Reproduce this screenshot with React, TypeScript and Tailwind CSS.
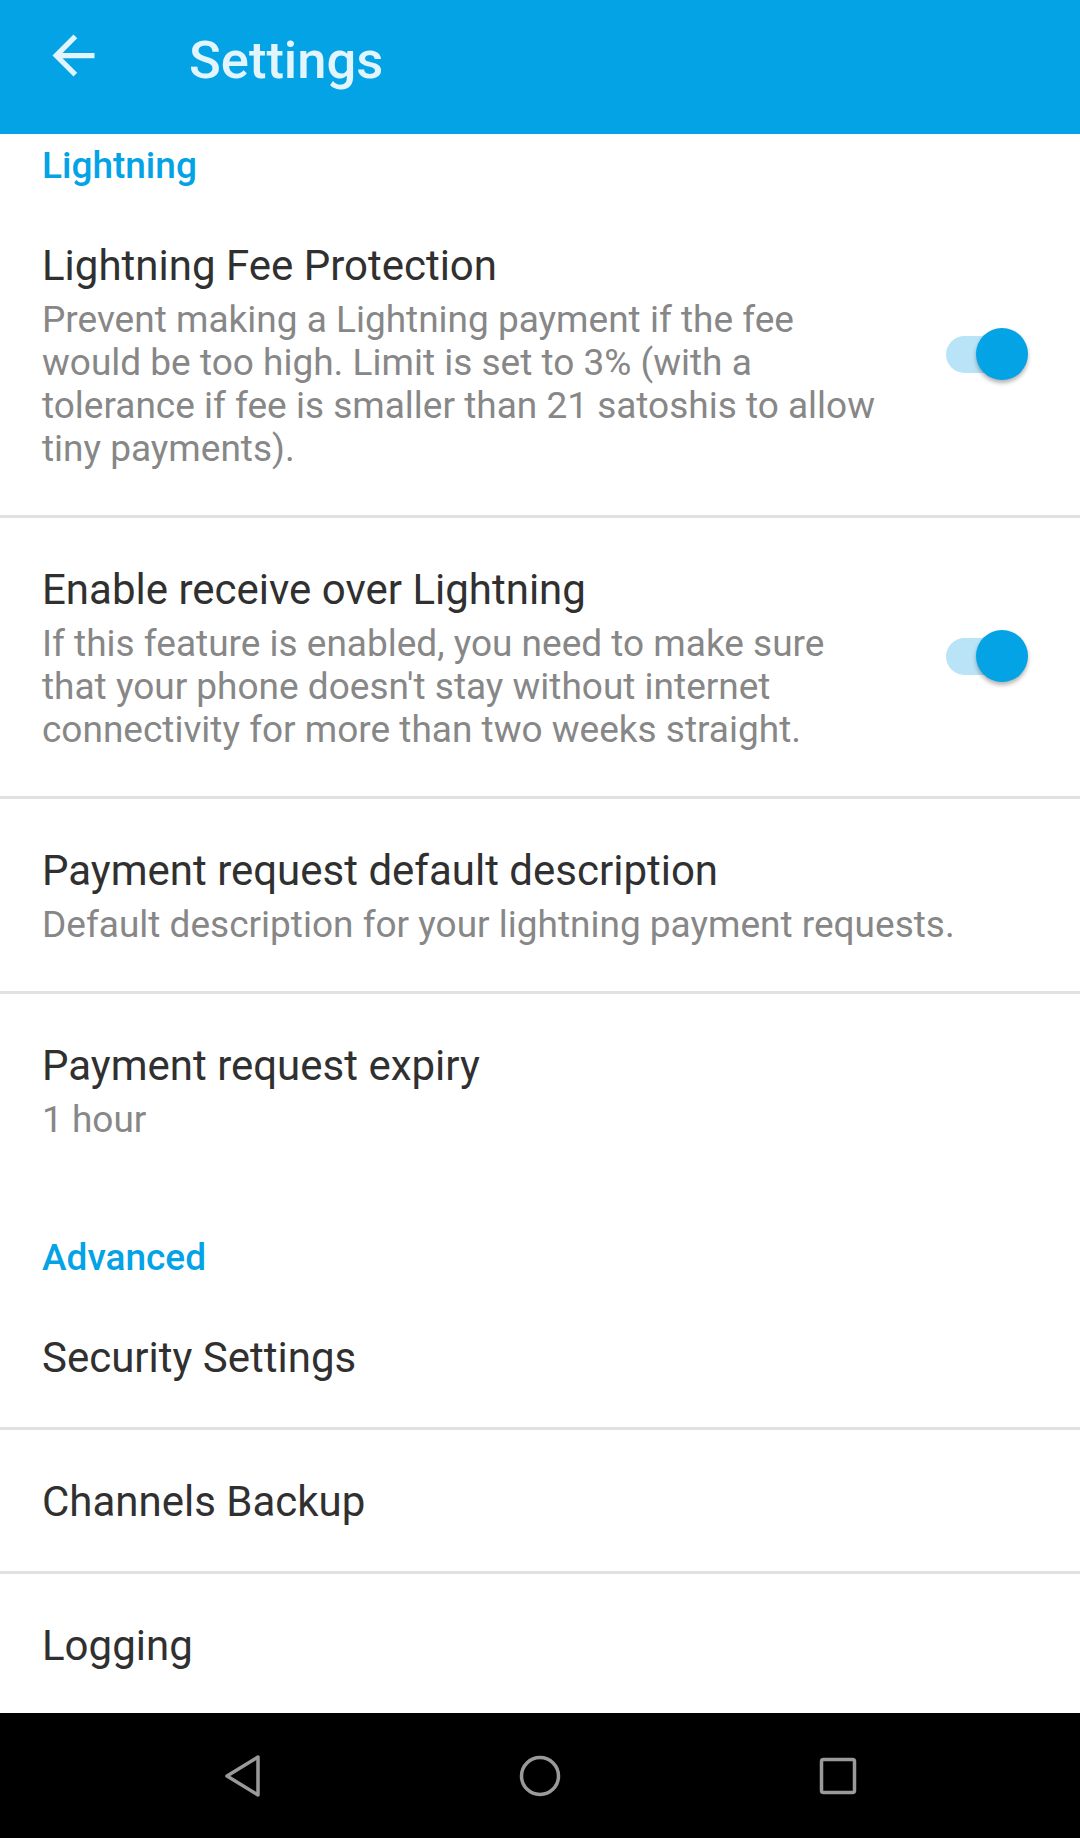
import { useState } from 'react';

const BLUE = '#03a3e6';

type Pref = {
  title: string;
  summary?: string;
  toggle?: boolean;
};

type Category = {
  label: string;
  top: string;
  items: Pref[];
};

const CATEGORIES: Category[] = [
  {
    label: 'Lightning',
    top: 'pt-[10px]',
    items: [
      {
        title: 'Lightning Fee Protection',
        summary:
          'Prevent making a Lightning payment if the fee would be too high. Limit is set to 3% (with a tolerance if fee is smaller than 21 satoshis to allow tiny payments).',
        toggle: true,
      },
      {
        title: 'Enable receive over Lightning',
        summary:
          "If this feature is enabled, you need to make sure that your phone doesn't stay without internet connectivity for more than two weeks straight.",
        toggle: true,
      },
      {
        title: 'Payment request default description',
        summary: 'Default description for your lightning payment requests.',
      },
      {
        title: 'Payment request expiry',
        summary: '1 hour',
      },
    ],
  },
  {
    label: 'Advanced',
    top: 'pt-[50px]',
    items: [
      { title: 'Security Settings' },
      { title: 'Channels Backup' },
      { title: 'Logging' },
    ],
  },
];

function Switch({ defaultOn }: { defaultOn: boolean }) {
  const [on, setOn] = useState(defaultOn);
  return (
    <button
      type="button"
      onClick={() => setOn(!on)}
      className="relative block w-[82px] h-[52px] shrink-0"
    >
      <span
        className={`absolute left-0 top-[8px] w-[74px] h-[37px] rounded-full ${
          on ? 'bg-[#b9e4f8]' : 'bg-[#bdbdbd]'
        }`}
      />
      <span
        className={`absolute top-0 w-[52px] h-[52px] rounded-full shadow-[0_3px_4px_rgba(0,0,0,0.3)] ${
          on ? 'right-0 bg-[#03a3e6]' : 'left-[-8px] bg-[#f1f1f1]'
        }`}
      />
    </button>
  );
}

function PrefRow({ pref, divider }: { pref: Pref; divider: boolean }) {
  return (
    <div className={divider ? 'border-b-[3px] border-[#e1e1e1]' : ''}>
      <div className="flex items-center pl-[42px] pt-[47px] pb-[45px]">
        <div className="flex-1 min-w-0 pr-[42px]">
          <div className="text-[42px] leading-[49px] text-[#303030]">
            {pref.title}
          </div>
          {pref.summary && (
            <div className="mt-[8px] text-[37px] leading-[43px] text-[#878787]">
              {pref.summary}
            </div>
          )}
        </div>
        {pref.toggle && (
          <div className="flex pl-[12px] pr-[52px] pb-[4px]">
            <Switch defaultOn />
          </div>
        )}
      </div>
    </div>
  );
}

export default function App() {
  return (
    <div
      className="w-[1080px] h-[1838px] flex flex-col bg-white overflow-hidden"
      style={{ fontFamily: 'Roboto, "Noto Sans", sans-serif' }}
    >
      <header className="h-[134px] shrink-0 flex items-start pl-[42px] bg-[#03a3e6]">
        <svg
          viewBox="0 0 24 24"
          className="w-[63px] h-[63px] mt-[24px] shrink-0"
          fill="#e2f4fc"
        >
          <path d="M20 11H7.83l5.59-5.59L12 4l-8 8 8 8 1.41-1.41L7.83 13H20v-2z" />
        </svg>
        <h1 className="ml-[84px] mt-[29px] text-[52.5px] leading-[62px] font-medium text-[#e2f4fc]">
          Settings
        </h1>
      </header>

      <main className="flex-1 overflow-hidden">
        {CATEGORIES.map(cat => (
          <section key={cat.label}>
            <div
              className={`${cat.top} pb-[7px] pl-[42px] text-[37px] leading-[43px] font-medium`}
              style={{ color: BLUE }}
            >
              {cat.label}
            </div>
            {cat.items.map((pref, i) => (
              <PrefRow
                key={pref.title}
                pref={pref}
                divider={i < cat.items.length - 1}
              />
            ))}
          </section>
        ))}
      </main>

      <nav className="h-[125px] shrink-0 bg-black flex items-center justify-center gap-[250px]">
        <svg viewBox="0 0 48 48" className="w-[48px] h-[48px]">
          <path
            d="M9 24 L40 5 L40 43 Z"
            fill="none"
            stroke="#9a9a9a"
            strokeWidth="3.5"
            strokeLinejoin="round"
          />
        </svg>
        <svg viewBox="0 0 48 48" className="w-[48px] h-[48px]">
          <circle cx="24" cy="24" r="18.5" fill="none" stroke="#9a9a9a" strokeWidth="3.5" />
        </svg>
        <svg viewBox="0 0 48 48" className="w-[48px] h-[48px]">
          <rect
            x="7.5"
            y="7.5"
            width="33"
            height="33"
            rx="2"
            fill="none"
            stroke="#9a9a9a"
            strokeWidth="3.5"
          />
        </svg>
      </nav>
    </div>
  );
}
